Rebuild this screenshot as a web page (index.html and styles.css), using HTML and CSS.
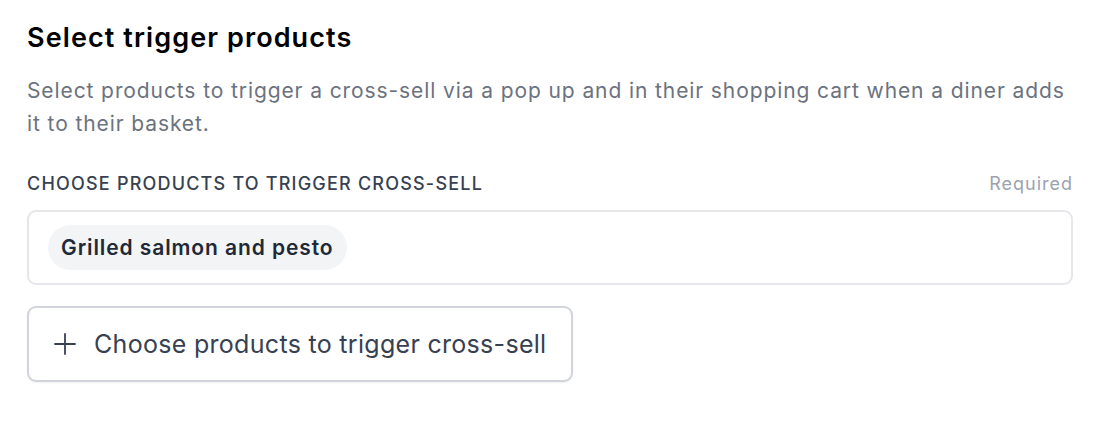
FILE: index.html
```html
<!DOCTYPE html>
<html lang="en">
<head>
    <meta charset="UTF-8">
    <meta name="viewport" content="width=device-width, initial-scale=1.0">
    <title>Select trigger products</title>
    <link rel="stylesheet" href="styles.css">
</head>
<body>

<div class="section">
    <h2 class="title">Select trigger products</h2>
    <p class="description">Select products to trigger a cross-sell via a pop up and in their shopping cart when a diner adds it to their basket.</p>

    <div class="field-header">
        <span class="field-label">Choose products to trigger cross-sell</span>
        <span class="field-hint">Required</span>
    </div>

    <div class="chip-box">
        <span class="chip">Grilled salmon and pesto</span>
    </div>

    <button type="button" class="add-button">
        <svg class="plus-icon" width="22" height="22" viewBox="0 0 22 22" fill="none" stroke="currentColor" stroke-width="1.8" stroke-linecap="round">
            <path d="M11 1v20M1 11h20"/>
        </svg>
        <span>Choose products to trigger cross-sell</span>
    </button>
</div>

</body>
</html>
```

FILE: styles.css
```css
body {
    font-family: Inter, "Noto Sans", Arial, sans-serif;
    margin: 0;
    padding: 0;
    background-color: #fff;
    color: #111827;
}
.section {
    padding: 20px 27px;
}
.title {
    margin: 0;
    font-size: 27px;
    font-weight: 600;
    letter-spacing: 1.1px;
    color: #000;
    line-height: 36px;
}
.description {
    margin: 18px 0 0 0;
    font-size: 21px;
    line-height: 33px;
    letter-spacing: 0.9px;
    color: #6b7280;
    max-width: 1046px;
}
.field-header {
    display: flex;
    justify-content: space-between;
    align-items: baseline;
    margin-top: 32px;
    line-height: 24px;
}
.field-label {
    text-transform: uppercase;
    font-size: 18px;
    font-weight: 500;
    letter-spacing: 1.2px;
    color: #374151;
}
.field-hint {
    font-size: 18px;
    letter-spacing: 1px;
    color: #9ca3af;
}
.chip-box {
    margin-top: 14px;
    border: 2px solid #e5e7eb;
    border-radius: 9px;
    height: 71px;
    padding: 0 19px;
    display: flex;
    align-items: center;
}
.chip {
    background-color: #f3f4f6;
    border-radius: 999px;
    padding: 0 14px 0 13px;
    height: 45px;
    display: flex;
    align-items: center;
    font-size: 21px;
    font-weight: 600;
    letter-spacing: 0.9px;
    color: #1f2937;
}
.add-button {
    margin-top: 21px;
    display: flex;
    align-items: center;
    gap: 18px;
    height: 76px;
    padding: 0 25px;
    background-color: #fff;
    border: 2px solid #d1d5db;
    border-radius: 9px;
    box-shadow: 0 1px 2px rgba(0, 0, 0, 0.06);
    font-family: inherit;
    font-size: 25px;
    letter-spacing: 0.3px;
    color: #374151;
}
.plus-icon {
    color: #374151;
}
```
